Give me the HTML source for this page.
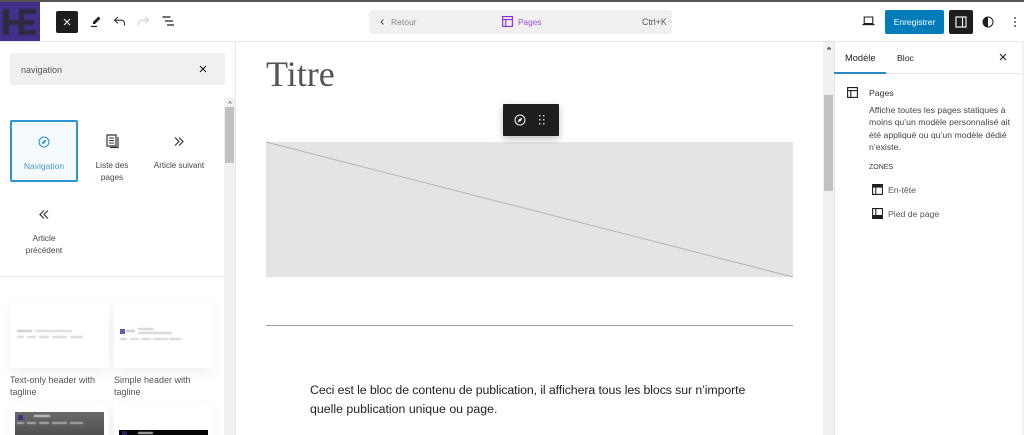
<!DOCTYPE html>
<html lang="fr">
<head>
<meta charset="utf-8">
<title>Éditeur</title>
<style>
*{box-sizing:border-box}
html,body{margin:0;padding:0;background:#fff;width:1024px;height:435px;overflow:hidden}
#w{width:1024px;height:435px;position:relative;overflow:hidden;font-family:"Liberation Sans",sans-serif;color:#1e1e1e}
.a{position:absolute}
.t{position:absolute;white-space:nowrap;font-size:8.700px;line-height:12px;color:#444}
.c{text-align:center}
svg{position:absolute;display:block;overflow:visible}
.card{position:absolute;background:#fff;border-radius:3px;box-shadow:0 5px 14px rgba(0,0,0,.06)}
.ln{position:absolute;height:2px;background:#d6d6d6;filter:blur(.4px)}
.lg{position:absolute;background:#2c2a3c;filter:blur(.4px)}
</style>
</head>
<body>
<div id="w">
<!-- top edge and top bar -->
<div class="a" style="left:0;top:0;width:1024px;height:2px;background:#555"></div>
<div class="a" style="left:0;top:41px;width:1024px;height:1px;background:#e6e6e6"></div>

<!-- logo -->
<div class="a" style="left:0;top:2px;width:40px;height:39px;background:#43308a;overflow:hidden">
  <div class="lg" style="left:3px;top:7px;width:6px;height:26px"></div>
  <div class="lg" style="left:9px;top:18px;width:10px;height:5px"></div>
  <div class="lg" style="left:19px;top:7px;width:5px;height:26px"></div>
  <div class="lg" style="left:24px;top:7px;width:12px;height:5px"></div>
  <div class="lg" style="left:24px;top:18px;width:10px;height:5px"></div>
  <div class="lg" style="left:24px;top:28px;width:12px;height:5px"></div>
</div>

<!-- toolbar left -->
<div class="a" style="left:56px;top:11px;width:22px;height:22px;background:#1e1e1e;border-radius:2px"></div>
<svg style="left:63px;top:18px" width="8" height="8" viewBox="0 0 8 8"><path d="M1 1l6 6M7 1L1 7" stroke="#eee" stroke-width="1.100" fill="none"/></svg>
<svg style="left:90px;top:15px" width="12" height="13" viewBox="0 0 12 13"><path d="M3 7L8.500 1.500 10.500 3.500 5 9H3z" fill="#1e1e1e"/><path d="M1 11.500h6" stroke="#1e1e1e" stroke-width="1.200"/></svg>
<svg style="left:113px;top:15px" width="13" height="12" viewBox="0 0 13 12"><path d="M5 2L1.500 5.200 5 8.400M1.500 5.200H8.500a3 3 0 0 1 3 3V10.500" stroke="#333" stroke-width="1.100" fill="none"/></svg>
<svg style="left:137px;top:15px" width="13" height="12" viewBox="0 0 13 12"><path d="M8 2l3.500 3.200L8 8.400M11.500 5.200H4.500a3 3 0 0 0-3 3V10.500" stroke="#d0d0d0" stroke-width="1.100" fill="none"/></svg>
<svg style="left:161px;top:15px" width="14" height="12" viewBox="0 0 14 12"><path d="M1.500 2h8M4 6h8M6 10h7" stroke="#1e1e1e" stroke-width="1.200" fill="none"/></svg>

<!-- command bar -->
<div class="a" style="left:369px;top:10px;width:303px;height:24px;background:#f0f0f0;border-radius:3px"></div>
<svg style="left:380px;top:19px" width="5" height="6" viewBox="0 0 5 6"><path d="M3.500.5L1 3l2.500 2.500" stroke="#555" stroke-width="1" fill="none"/></svg>
<div class="t" style="left:391px;top:16px;color:#8a8a8a;font-size:8.500px">Retour</div>
<svg style="left:502px;top:16px" width="11" height="11" viewBox="0 0 11 11"><path d="M.6.6h9.800v9.800H.6zM.6 3.600h9.800M3.800 3.600v6.800" stroke="#8a2be2" stroke-width="1.100" fill="none"/></svg>
<div class="t" style="left:518px;top:16px;color:#9b51e0;font-size:8.300px">Pages</div>
<div class="t" style="left:642px;top:16px;color:#555;font-size:8.800px">Ctrl+K</div>

<!-- toolbar right -->
<svg style="left:862px;top:16px" width="13" height="10" viewBox="0 0 13 10"><path d="M2.200 1h8.600v6.500H2.200z" stroke="#1e1e1e" stroke-width="1.100" fill="none"/><path d="M.5 8.600h12" stroke="#1e1e1e" stroke-width="1.200"/></svg>
<div class="a" style="left:885px;top:10px;width:59px;height:24px;background:#007cba;border-radius:2px"></div>
<div class="t c" style="left:885px;top:16px;width:59px;color:#fff;font-size:8.500px">Enregistrer</div>
<div class="a" style="left:949px;top:10px;width:24px;height:24px;background:#1e1e1e;border-radius:2px"></div>
<svg style="left:955px;top:16px" width="12" height="12" viewBox="0 0 12 12"><path d="M1 1h10v10H1zM7.500 1v10" stroke="#eee" stroke-width="1.200" fill="none"/></svg>
<svg style="left:982px;top:16px" width="12" height="12" viewBox="0 0 12 12"><circle cx="6" cy="6" r="5" stroke="#1e1e1e" stroke-width="1" fill="none"/><path d="M6 1a5 5 0 0 0 0 10z" fill="#1e1e1e"/></svg>
<svg style="left:1013px;top:16px" width="4" height="12" viewBox="0 0 4 12"><circle cx="2" cy="2" r=".9" fill="#1e1e1e"/><circle cx="2" cy="6" r=".9" fill="#1e1e1e"/><circle cx="2" cy="10" r=".9" fill="#1e1e1e"/></svg>

<!-- left panel -->
<div class="a" style="left:235px;top:42px;width:1px;height:393px;background:#e6e6e6"></div>
<div class="a" style="left:10px;top:53px;width:215px;height:32px;background:#f0f0f0;border-radius:2px"></div>
<div class="t" style="left:21px;top:64px;color:#555;font-size:9px">navigation</div>
<svg style="left:199px;top:65px" width="8" height="8" viewBox="0 0 8 8"><path d="M1 1l6 6M7 1L1 7" stroke="#1e1e1e" stroke-width="1.100" fill="none"/></svg>

<!-- left scrollbar -->
<div class="a" style="left:224px;top:97px;width:11px;height:338px;background:#f1f1f1"></div>
<div class="a" style="left:225px;top:107px;width:9px;height:56px;background:#c1c1c1"></div>
<svg style="left:227px;top:100px" width="6" height="4" viewBox="0 0 6 4"><path d="M3 .5L5.500 3.500H.5z" fill="#a3a3a3"/></svg>

<!-- block inserter -->
<div class="a" style="left:10px;top:120px;width:68px;height:62px;background:#f4fafd;border:2px solid #2b95cf;border-radius:2px"></div>
<svg style="left:38px;top:136px" width="12" height="12" viewBox="0 0 12 12"><circle cx="6" cy="6" r="5" stroke="#2b95cf" stroke-width="1.100" fill="none"/><path d="M8.400 3.600L7 7 3.600 8.400 5 5z" fill="#2b95cf"/></svg>
<div class="t c" style="left:10px;top:160px;width:68px;color:#4b9cc9;font-size:8.500px">Navigation</div>

<svg style="left:106px;top:134px" width="14" height="15" viewBox="0 0 14 15"><path d="M1 1h9v11H1z" stroke="#333" stroke-width="1.200" fill="none"/><path d="M3 4h5M3 6.500h5M3 9h5" stroke="#333"/><path d="M12 3v10.500H4" stroke="#333" stroke-width="1.200" fill="none"/></svg>
<div class="t c" style="left:78px;top:160px;width:68px;font-size:8.200px;line-height:11.500px">Liste des<br>pages</div>

<svg style="left:173px;top:136px" width="12" height="11" viewBox="0 0 12 11"><path d="M2 1.500L6 5.500 2 9.500M6 1.500l4 4-4 4" stroke="#333" stroke-width="1.200" fill="none"/></svg>
<div class="t c" style="left:145px;top:160px;width:68px;font-size:8.100px">Article suivant</div>

<svg style="left:38px;top:209px" width="12" height="11" viewBox="0 0 12 11"><path d="M10 1.500L6 5.500l4 4M6 1.500l-4 4 4 4" stroke="#333" stroke-width="1.200" fill="none"/></svg>
<div class="t c" style="left:10px;top:233px;width:68px;font-size:8.200px;line-height:11.500px">Article<br>précédent</div>

<div class="a" style="left:0;top:276px;width:224px;height:1px;background:#e6e6e6"></div>

<!-- patterns -->
<div class="card" style="left:10px;top:301px;width:99px;height:67px"></div>
<div class="ln" style="left:17px;top:330px;width:15px;background:#c4c4c4"></div>
<div class="ln" style="left:35px;top:330px;width:37px;background:#d8d8d8"></div>
<div class="ln" style="left:17px;top:336px;width:7px"></div>
<div class="ln" style="left:27px;top:336px;width:9px"></div>
<div class="ln" style="left:39px;top:336px;width:10px"></div>
<div class="ln" style="left:52px;top:336px;width:15px"></div>
<div class="ln" style="left:70px;top:336px;width:13px"></div>

<div class="card" style="left:114px;top:301px;width:99px;height:67px"></div>
<div class="a" style="left:120px;top:329px;width:5px;height:5px;background:#6a5aa8"></div>
<div class="ln" style="left:126px;top:330px;width:9px;background:#c4c4c4"></div>
<div class="ln" style="left:138px;top:328px;width:16px;background:#d0d0d0"></div>
<div class="ln" style="left:138px;top:332px;width:34px;background:#d0d0d0"></div>
<div class="ln" style="left:120px;top:338px;width:7px"></div>
<div class="ln" style="left:130px;top:338px;width:9px"></div>
<div class="ln" style="left:141px;top:338px;width:10px"></div>
<div class="ln" style="left:153px;top:338px;width:15px"></div>
<div class="ln" style="left:169px;top:338px;width:12px"></div>

<div class="t" style="left:10px;top:374px;font-size:9px;color:#555">Text-only header with</div>
<div class="t" style="left:10px;top:386px;font-size:9px;color:#555">tagline</div>
<div class="t" style="left:114px;top:374px;font-size:9px;color:#555">Simple header with</div>
<div class="t" style="left:114px;top:386px;font-size:9px;color:#555">tagline</div>

<div class="card" style="left:10px;top:403px;width:99px;height:40px"></div>
<div class="a" style="left:15px;top:412px;width:89px;height:23px;background:linear-gradient(180deg,#6a6a6a,#505050)"></div>
<div class="a" style="left:18px;top:415px;width:5px;height:5px;background:#43307a"></div>
<div class="ln" style="left:34px;top:415px;width:16px;background:#ccc"></div>
<div class="ln" style="left:17px;top:422px;width:7px;background:#aaa"></div>
<div class="ln" style="left:27px;top:422px;width:9px;background:#aaa"></div>
<div class="ln" style="left:39px;top:422px;width:10px;background:#aaa"></div>
<div class="ln" style="left:52px;top:422px;width:15px;background:#aaa"></div>
<div class="ln" style="left:70px;top:422px;width:13px;background:#aaa"></div>

<div class="card" style="left:114px;top:403px;width:99px;height:40px"></div>
<div class="a" style="left:119px;top:430px;width:89px;height:5px;background:#050505"></div>
<div class="a" style="left:122px;top:431px;width:5px;height:4px;background:#2a1f5a"></div>
<div class="ln" style="left:138px;top:432px;width:15px;background:#bbb"></div>

<!-- canvas -->
<div class="t" style="left:266px;top:54px;font-family:'Liberation Serif',serif;font-size:36px;line-height:41px;color:#555">Titre</div>

<div class="a" style="left:266px;top:142px;width:527px;height:135px;background:#e4e4e4"></div>
<svg style="left:266px;top:142px" width="527" height="135" viewBox="0 0 527 135"><path d="M0 0L527 135" stroke="#b4b4b4" stroke-width="1" fill="none"/></svg>

<div class="a" style="left:503px;top:104px;width:56px;height:32px;background:#1e1e1e;border-radius:1px;box-shadow:0 3px 8px rgba(0,0,0,.25)"></div>
<svg style="left:514px;top:114px" width="12" height="12" viewBox="0 0 12 12"><circle cx="6" cy="6" r="5" stroke="#eee" stroke-width="1.100" fill="none"/><path d="M8.400 3.600L7 7 3.600 8.400 5 5z" fill="#eee"/></svg>
<svg style="left:538px;top:115px" width="7" height="11" viewBox="0 0 7 11"><g fill="#ccc"><rect x="1" y="0" width="1.500" height="1.500"/><rect x="5" y="0" width="1.500" height="1.500"/><rect x="1" y="4" width="1.500" height="1.500"/><rect x="5" y="4" width="1.500" height="1.500"/><rect x="1" y="8" width="1.500" height="1.500"/><rect x="5" y="8" width="1.500" height="1.500"/></g></svg>

<div class="a" style="left:266px;top:325px;width:527px;height:1px;background:#9a9a9a"></div>

<div class="t" style="left:310px;top:380px;font-size:12.350px;line-height:20px;color:#222;letter-spacing:-.1px">Ceci est le bloc de contenu de publication, il affichera tous les blocs sur n’importe</div>
<div class="t" style="left:310px;top:399px;font-size:12.350px;line-height:20px;color:#222">quelle publication unique ou page.</div>

<!-- center scrollbar -->
<div class="a" style="left:823px;top:42px;width:11px;height:393px;background:#f1f1f1"></div>
<div class="a" style="left:824px;top:95px;width:9px;height:96px;background:#c1c1c1"></div>
<svg style="left:826px;top:46px" width="6" height="4" viewBox="0 0 6 4"><path d="M3 .5L5.500 3.500H.5z" fill="#555"/></svg>

<!-- right panel -->
<div class="a" style="left:834px;top:42px;width:1px;height:393px;background:#e6e6e6"></div>
<div class="a" style="left:1022px;top:42px;width:2px;height:393px;background:#f1f1f1"></div>
<div class="t" style="left:845px;top:52px;font-size:9.300px;color:#1e1e1e">Modèle</div>
<div class="t" style="left:897px;top:52px;font-size:8.700px;color:#1e1e1e">Bloc</div>
<svg style="left:999px;top:53px" width="8" height="8" viewBox="0 0 8 8"><path d="M1 1l6 6M7 1L1 7" stroke="#1e1e1e" stroke-width="1.100" fill="none"/></svg>
<div class="a" style="left:835px;top:73px;width:187px;height:1px;background:#e6e6e6"></div>
<div class="a" style="left:834px;top:72px;width:52px;height:2px;background:#2b88c4"></div>

<svg style="left:847px;top:87px" width="11" height="11" viewBox="0 0 11 11"><path d="M.6.6h9.800v9.800H.6zM.6 3.600h9.800M3.800 3.600v6.800" stroke="#1e1e1e" stroke-width="1.100" fill="none"/></svg>
<div class="t" style="left:869px;top:87px;color:#333;font-size:8.700px">Pages</div>
<div class="t" style="left:869px;top:104px;color:#444;line-height:12px;font-size:8.700px">Affiche toutes les pages statiques à</div>
<div class="t" style="left:869px;top:116px;color:#444;line-height:12px;font-size:8.700px">moins qu’un modèle personnalisé ait</div>
<div class="t" style="left:869px;top:129px;color:#444;line-height:12px;font-size:8.700px">été appliqué ou qu’un modèle dédié</div>
<div class="t" style="left:869px;top:141px;color:#444;line-height:12px;font-size:8.700px">n’existe.</div>
<div class="t" style="left:869px;top:162px;color:#333;font-size:7px">ZONES</div>

<svg style="left:872px;top:184px" width="11" height="11" viewBox="0 0 11 11"><path d="M.6.6h9.800v9.800H.6z" stroke="#1e1e1e" stroke-width="1.100" fill="none"/><path d="M.6.6h9.800v3H.6z" fill="#1e1e1e"/><path d="M3.800 3.600v6.800" stroke="#1e1e1e" stroke-width="1.100"/></svg>
<div class="t" style="left:888px;top:184px;color:#555">En-tête</div>
<svg style="left:872px;top:208px" width="11" height="11" viewBox="0 0 11 11"><path d="M.6.6h9.800v9.800H.6z" stroke="#1e1e1e" stroke-width="1.100" fill="none"/><path d="M.6 7h9.800v3.400H.6z" fill="#1e1e1e"/><path d="M3.800.6v6.400" stroke="#1e1e1e" stroke-width="1.100"/></svg>
<div class="t" style="left:888px;top:208px;color:#555">Pied de page</div>
</div>
</body>
</html>
